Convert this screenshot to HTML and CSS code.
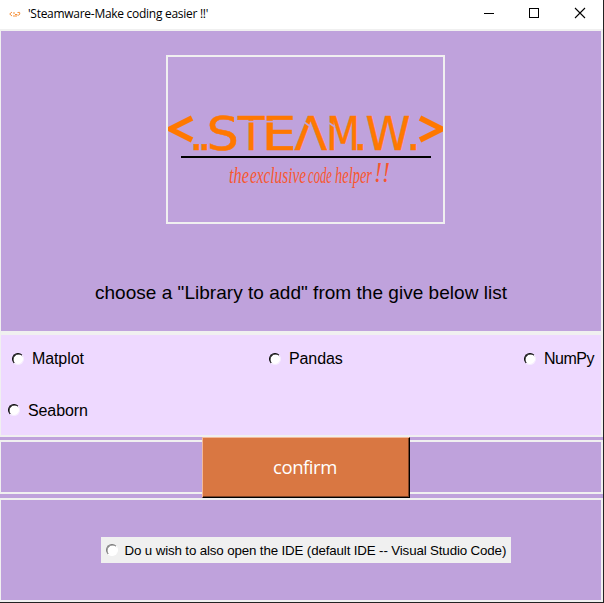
FILE: index.html
```html
<!DOCTYPE html>
<html lang="en">
<head>
<meta charset="utf-8">
<title>'Steamware-Make coding easier !!'</title>
<link rel="stylesheet" href="styles.css">
</head>
<body>
<div class="window">
  <header class="titlebar">
    <svg class="app-icon" width="12" height="8" viewBox="0 0 12 8" fill="none" stroke="#f6923c"><path d="M3 1L.7 3L3 5M8.500 1.500q3-1 2.300 1.500q-1 2-2.500 1M4 2h2M4 5h4M6 3.500h2"/></svg>
    <span class="title">'Steamware-Make coding easier !!'</span>
    <svg class="controls" width="104" height="12" viewBox="0 0 104 12" fill="none" stroke="#000" shape-rendering="crispEdges"><path d="M0 6.500h10M45.500 1.500h9v9h-9z"/><path shape-rendering="auto" stroke-width="1.100" d="M91 1l10 10M101 1l-10 10"/></svg>
  </header>
  <section class="panel hero">
    <div class="logo">
      <svg width="275" height="165" viewBox="168 57 275 165">
        <path class="chevron" d="M192 118L170 129L192 140M420 118L442 129L420 140"/>
        <text class="brand" y="150"><tspan x="189 197">..</tspan><tspan x="206.600" textLength="32.300" lengthAdjust="spacingAndGlyphs">S</tspan><tspan x="238" textLength="26.500" lengthAdjust="spacingAndGlyphs">T</tspan><tspan x="261.600" textLength="34.700" lengthAdjust="spacingAndGlyphs">E</tspan><tspan x="294.600" textLength="32.800" lengthAdjust="spacingAndGlyphs">Λ</tspan><tspan x="326.200" textLength="33.700" lengthAdjust="spacingAndGlyphs">M</tspan><tspan x="353">.</tspan><tspan x="365.500" textLength="45" lengthAdjust="spacingAndGlyphs">W</tspan><tspan x="406">.</tspan></text>
        <path class="cut" d="M238 121.700h55M304 122l7 5M329 123l6 4"/>
        <path class="rule" d="M181 157h250"/>
        <text class="tagline" y="183"><tspan x="229" textLength="20" lengthAdjust="spacingAndGlyphs">the</tspan><tspan x="250" textLength="56" lengthAdjust="spacingAndGlyphs">exclusive</tspan><tspan x="308" textLength="24" lengthAdjust="spacingAndGlyphs">code</tspan><tspan x="335" textLength="37" lengthAdjust="spacingAndGlyphs">helper</tspan><tspan class="bang" x="374" y="182" textLength="16" lengthAdjust="spacingAndGlyphs">!!</tspan></text>
      </svg>
    </div>
    <p class="prompt">choose a "Library to add" from the give below list</p>
  </section>
  <section class="panel libraries">
    <div class="option matplot"><i class="radio"></i><span>Matplot</span></div>
    <div class="option pandas"><i class="radio"></i><span>Pandas</span></div>
    <div class="option numpy"><i class="radio"></i><span>NumPy</span></div>
    <div class="option seaborn"><i class="radio"></i><span>Seaborn</span></div>
  </section>
  <section class="panel action"><button class="confirm">confirm</button></section>
  <section class="panel ide">
    <div class="ide-option"><i class="radio soft"></i><span>Do u wish to also open the IDE (default IDE -- Visual Studio Code)</span></div>
  </section>
</div>
</body>
</html>
```
FILE: styles.css
```css
* { box-sizing: border-box; }
body { margin: 0; overflow: hidden; font-family: "Liberation Sans", Arial, sans-serif; color: #000; }
.window { width: 604px; height: 603px; background: #bfa2dc; border-right: 1px solid #222; border-bottom: 1px solid #222; }
.titlebar { height: 29px; background: #fff; display: flex; align-items: center; padding: 0 15px 3px 9px; }
.title { font: 12px/16px "Open Sans", "Noto Sans", sans-serif; margin: 2px 0 0 7px; flex: 1; letter-spacing: -.28px; white-space: nowrap; }
.app-icon { margin-top: 3px; }
.controls { flex: none; }
.panel { border: 2px solid #f0f0f0; border-left-width: 1px; }
.hero { height: 304px; display: flex; flex-direction: column; align-items: center; padding-top: 24px; }
.logo { width: 279px; height: 169px; border: 2px solid #f0f0f0; margin-left: 8px; }
.logo svg { display: block; }
.brand { fill: #ff7800; stroke: #ff7800; stroke-width: .5px; font: 46.5px "DejaVu Sans", sans-serif; }
.chevron { fill: none; stroke: #ff7800; stroke-width: 5.500px; }
.cut { fill: none; stroke: #bfa2dc; stroke-width: 1.800px; }
.rule { stroke: #000; stroke-width: 2px; }
.tagline { fill: #f8572f; font: italic 23px "Liberation Serif", serif; }
.bang { font-size: 30px; }
.prompt { margin: 58px 0 0; font-size: 19px; line-height: 22px; letter-spacing: .03px; white-space: nowrap; }
.libraries { height: 104px; background: #eed9ff; display: grid; grid-template-columns: 257px 255px 1fr; grid-template-rows: 48px 55px; align-content: start; padding-left: 11px; }
.option { display: flex; align-items: center; font-size: 16px; gap: 8px; letter-spacing: -.1px; white-space: nowrap; }
.numpy { letter-spacing: -.5px; }
.seaborn { margin-left: -4px; }
.radio { width: 12px; height: 12px; flex: none; margin-top: -1px; border-radius: 50%; background: #fff; border: 1px solid; border-color: #000 #f7edff #f7edff #000; box-shadow: inset .5px .5px #000; }
.soft { border-color: #777 #fff #fff #777; box-shadow: inset .5px .5px #777; }
.action { height: 54px; margin: 3px 0 4px; display: flex; justify-content: center; }
.confirm { width: 208px; height: 61px; flex: none; margin: -5px 0 0 10px; padding: 0 2px 2px 0; border: 1px solid; border-color: #f3b99b #000 #000 #f3b99b; box-shadow: inset -1px -1px #7d4225; background: #d97742; color: #fff; font: 18.5px "Open Sans", sans-serif; letter-spacing: -.45px; }
.ide { height: 104px; display: flex; justify-content: center; align-items: flex-start; padding-top: 37px; }
.ide-option { width: 410px; height: 26px; margin-left: 9px; padding-left: 5px; background: #f0f0f0; display: flex; align-items: center; gap: 7px; font-size: 13.33px; letter-spacing: -.14px; white-space: nowrap; }
```
